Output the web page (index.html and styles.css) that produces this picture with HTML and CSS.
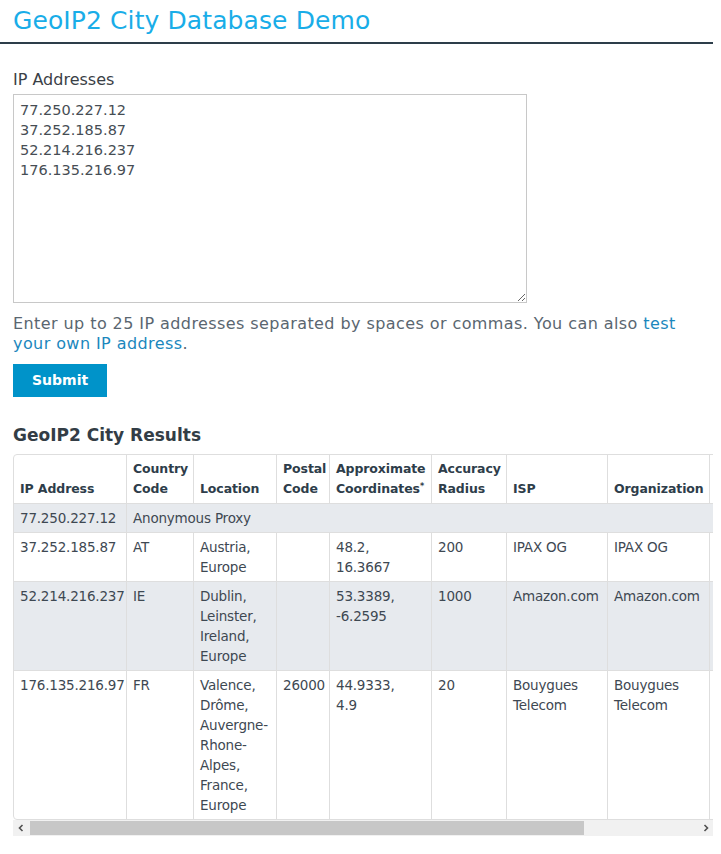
FILE: index.html
```html
<!DOCTYPE html>
<html lang="en">
<head>
<meta charset="utf-8">
<title>GeoIP2 City Database Demo</title>
<link rel="stylesheet" href="styles.css">
</head>
<body>
<div class="page">
  <header class="top">
    <h1 class="title">GeoIP2 City Database Demo</h1>
  </header>
  <main class="content">
    <form class="lookup">
      <label class="label" for="ips">IP Addresses</label>
      <textarea id="ips" class="ips">77.250.227.12
37.252.185.87
52.214.216.237
176.135.216.97</textarea>
      <p class="help">Enter up to 25 IP addresses separated by spaces or commas. You can also <a href="#" class="link">test your own IP address</a>.</p>
      <button type="button" class="submit">Submit</button>
    </form>
    <h2 class="results-title">GeoIP2 City Results</h2>
    <div class="table-box">
      <div class="table-wrap">
        <table class="results">
          <thead>
            <tr>
              <th class="c-ip">IP Address</th>
              <th class="c-cc">Country Code</th>
              <th class="c-loc">Location</th>
              <th class="c-post">Postal Code</th>
              <th class="c-coord">Approximate Coordinates<span class="ast">*</span></th>
              <th class="c-acc">Accuracy Radius</th>
              <th class="c-isp">ISP</th>
              <th class="c-org">Organization</th>
              <th class="c-dom">Domain</th>
            </tr>
          </thead>
          <tbody>
            <tr class="shade">
              <td>77.250.227.12</td>
              <td colspan="8">Anonymous Proxy</td>
            </tr>
            <tr>
              <td>37.252.185.87</td>
              <td>AT</td>
              <td>Austria, Europe</td>
              <td></td>
              <td class="coord">48.2, 16.3667</td>
              <td>200</td>
              <td>IPAX OG</td>
              <td>IPAX OG</td>
              <td>ipax.at</td>
            </tr>
            <tr class="shade">
              <td>52.214.216.237</td>
              <td>IE</td>
              <td>Dublin, Leinster, Ireland, Europe</td>
              <td></td>
              <td class="coord">53.3389, -6.2595</td>
              <td>1000</td>
              <td>Amazon.com</td>
              <td>Amazon.com</td>
              <td>amazonaws.com</td>
            </tr>
            <tr>
              <td>176.135.216.97</td>
              <td>FR</td>
              <td>Valence, Drôme, Auvergne-Rhone-Alpes, France, Europe</td>
              <td>26000</td>
              <td class="coord">44.9333, 4.9</td>
              <td>20</td>
              <td>Bouygues Telecom</td>
              <td>Bouygues Telecom</td>
              <td>bbox.fr</td>
            </tr>
          </tbody>
        </table>
      </div>
      <div class="hscroll" aria-hidden="true">
        <span class="hs-btn">
          <svg width="8" height="8" viewBox="0 0 8 8"><polyline points="5.5,1 2.5,4 5.5,7" fill="none" stroke="#505050" stroke-width="1.6"/></svg>
        </span>
        <div class="hs-track"><div class="hs-thumb"></div></div>
        <span class="hs-btn">
          <svg width="8" height="8" viewBox="0 0 8 8"><polyline points="2.5,1 5.5,4 2.5,7" fill="none" stroke="#505050" stroke-width="1.6"/></svg>
        </span>
      </div>
    </div>
  </main>
</div>
</body>
</html>
```

FILE: styles.css
```css
html, body {
  margin: 0;
  padding: 0;
  background: #ffffff;
}

body {
  font-family: "DejaVu Sans", "Liberation Sans", sans-serif;
  color: #3c444c;
}

.page {
  width: 713px;
}

.top {
  border-bottom: 2px solid #2d3e4a;
}

.title {
  margin: 0;
  padding: 6px 0 6px 13px;
  font-size: 25px;
  line-height: 30px;
  font-weight: normal;
  color: #19ade8;
  letter-spacing: 0.1px;
}

.content {
  padding: 26px 0 0 13px;
}

.lookup {
  margin: 0;
}

.label {
  display: block;
  font-size: 16px;
  line-height: 20px;
  color: #3a4046;
}

.ips {
  display: block;
  box-sizing: border-box;
  width: 514px;
  height: 209px;
  margin: 4px 0 0 0;
  padding: 5px 6px;
  border: 1px solid #c8c8c8;
  border-radius: 0;
  font-family: "DejaVu Sans", "Liberation Sans", sans-serif;
  font-size: 14.5px;
  line-height: 20px;
  color: #464d54;
  resize: both;
  outline: none;
}

.help {
  margin: 11px 0 0 0;
  font-size: 16px;
  line-height: 20px;
  color: #5a6670;
  letter-spacing: 0.42px;
}

.link {
  color: #1b87bd;
  text-decoration: none;
}

.submit {
  display: block;
  margin: 10px 0 0 0;
  height: 33px;
  padding: 0 19px;
  border: none;
  border-radius: 0;
  background: #0093c9;
  color: #ffffff;
  font-family: "DejaVu Sans", "Liberation Sans", sans-serif;
  font-size: 14px;
  font-weight: bold;
  line-height: 33px;
}

.results-title {
  margin: 26px 0 7px 0;
  font-size: 17px;
  line-height: 24px;
  font-weight: bold;
  color: #333d46;
}

.table-box {
  width: 700px;
}

.table-wrap {
  overflow: hidden;
  width: 700px;
}

.hscroll {
  display: flex;
  align-items: stretch;
  height: 16px;
  background: #f1f1f1;
}

.hs-btn {
  display: flex;
  align-items: center;
  justify-content: center;
  width: 15px;
  flex: 0 0 15px;
}

.hs-btn svg {
  display: block;
}

.hs-track {
  flex: 1 1 auto;
  display: flex;
  align-items: stretch;
  padding: 1px 0;
}

.hs-thumb {
  margin-left: 2px;
  width: 554px;
  background: #c7c7c7;
}

.results {
  border-collapse: separate;
  border-spacing: 0;
  border: 1px solid #dedede;
  border-radius: 4px;
  table-layout: fixed;
  width: 847px;
}

.results th,
.results td {
  box-sizing: border-box;
  border-left: 1px solid #dedede;
  border-top: 1px solid #dedede;
  padding: 4px 4px 4px 6px;
  line-height: 20px;
  text-align: left;
}

.results th:first-child,
.results td:first-child {
  border-left: none;
}

.results thead th {
  border-top: none;
  vertical-align: bottom;
  font-size: 12.5px;
  font-weight: bold;
  color: #2e3d4a;
  letter-spacing: -0.1px;
}

.results td {
  vertical-align: top;
  font-size: 13.5px;
  letter-spacing: -0.2px;
  color: #3e4852;
}

.results td.coord {
  padding-right: 14px;
}

.results tr.shade td {
  background: #e7eaee;
}

.ast {
  font-size: 8px;
  vertical-align: 4px;
  line-height: 0;
}

.c-ip { width: 112px; }
.c-cc { width: 67px; }
.c-loc { width: 83px; }
.c-post { width: 53px; }
.c-coord { width: 102px; }
.c-acc { width: 75px; }
.c-isp { width: 101px; }
.c-org { width: 102px; }
.c-dom { width: 150px; }
```
